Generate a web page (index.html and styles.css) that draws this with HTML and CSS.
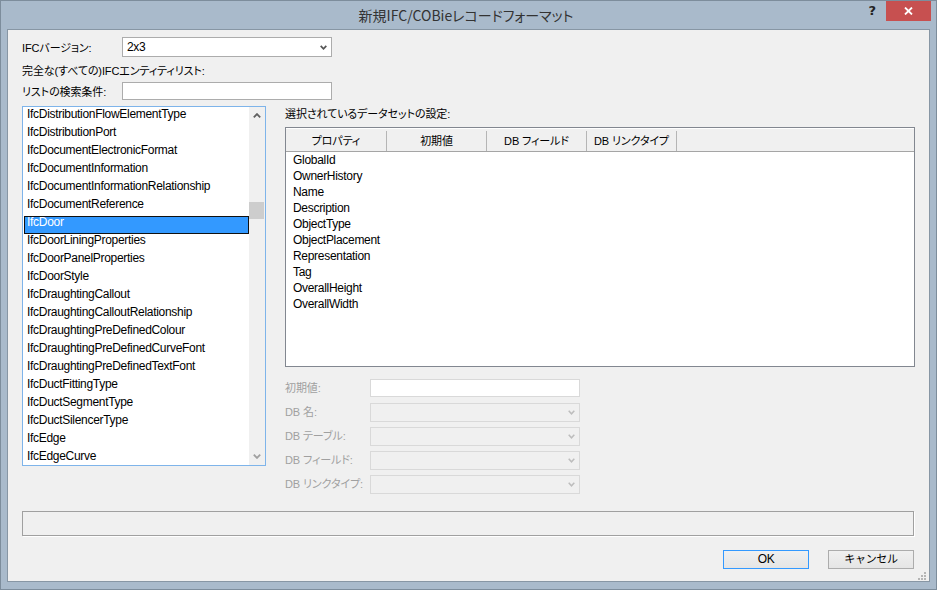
FILE: index.html
```html
<!DOCTYPE html>
<html lang="ja">
<head>
<meta charset="utf-8">
<title>新規IFC/COBieレコードフォーマット</title>
<link rel="stylesheet" href="styles.css">
</head>
<body>
<div class="window">
  <div class="titlebar">
    <div class="tb-left"></div>
    <div class="title">新規IFC/COBieレコードフォーマット</div>
    <div class="caption-buttons">
      <span class="help">?</span>
      <span class="close"><svg width="9" height="8" viewBox="0 0 9 8"><path d="M1 0.5 L8 7.5 M8 0.5 L1 7.5" stroke="#fff" stroke-width="1.8" fill="none"/></svg></span>
    </div>
  </div>
  <div class="content">
    <div class="row r1">
      <span class="lbl ja">IFCバージョン:</span>
      <div class="select"><span>2x3</span><svg class="chev" width="7" height="5" viewBox="0 0 7 5"><path d="M0.7 0.8 L3.5 3.8 L6.3 0.8" stroke="#555" stroke-width="1.7" fill="none"/></svg></div>
    </div>
    <div class="row r2 ja">完全な(すべての)IFCエンティティリスト:</div>
    <div class="row r3">
      <span class="lbl ja">リストの検索条件:</span>
      <div class="input"></div>
    </div>
    <div class="main">
      <div class="listbox">
        <div class="items">
          <div class="item">IfcDistributionFlowElementType</div>
          <div class="item">IfcDistributionPort</div>
          <div class="item">IfcDocumentElectronicFormat</div>
          <div class="item">IfcDocumentInformation</div>
          <div class="item">IfcDocumentInformationRelationship</div>
          <div class="item">IfcDocumentReference</div>
          <div class="item selected">IfcDoor</div>
          <div class="item">IfcDoorLiningProperties</div>
          <div class="item">IfcDoorPanelProperties</div>
          <div class="item">IfcDoorStyle</div>
          <div class="item">IfcDraughtingCallout</div>
          <div class="item">IfcDraughtingCalloutRelationship</div>
          <div class="item">IfcDraughtingPreDefinedColour</div>
          <div class="item">IfcDraughtingPreDefinedCurveFont</div>
          <div class="item">IfcDraughtingPreDefinedTextFont</div>
          <div class="item">IfcDuctFittingType</div>
          <div class="item">IfcDuctSegmentType</div>
          <div class="item">IfcDuctSilencerType</div>
          <div class="item">IfcEdge</div>
          <div class="item">IfcEdgeCurve</div>
        </div>
        <div class="vscroll">
          <div class="sbtn"><svg width="8" height="5" viewBox="0 0 8 5"><path d="M0.8 4.3 L4 1.1 L7.2 4.3" stroke="#606060" stroke-width="1.8" fill="none"/></svg></div>
          <div class="track"><div class="thumb"></div></div>
          <div class="sbtn"><svg width="8" height="5" viewBox="0 0 8 5"><path d="M0.8 0.7 L4 3.9 L7.2 0.7" stroke="#a0a0a0" stroke-width="1.8" fill="none"/></svg></div>
        </div>
      </div>
      <div class="right">
        <div class="caption ja">選択されているデータセットの設定:</div>
        <div class="listview">
          <div class="lv-header ja">
            <div class="hcell c1">プロパティ</div>
            <div class="hcell c2">初期値</div>
            <div class="hcell c3">DB フィールド</div>
            <div class="hcell c4">DB リンクタイプ</div>
          </div>
          <div class="lv-body">
            <div class="lv-row">GlobalId</div>
            <div class="lv-row">OwnerHistory</div>
            <div class="lv-row">Name</div>
            <div class="lv-row">Description</div>
            <div class="lv-row">ObjectType</div>
            <div class="lv-row">ObjectPlacement</div>
            <div class="lv-row">Representation</div>
            <div class="lv-row">Tag</div>
            <div class="lv-row">OverallHeight</div>
            <div class="lv-row">OverallWidth</div>
          </div>
        </div>
        <div class="form">
          <div class="frow"><span class="flabel ja">初期値:</span><div class="finput"></div></div>
          <div class="frow"><span class="flabel ja">DB 名:</span><div class="fcombo"><div class="fcombo-text"></div><svg width="7" height="5" viewBox="0 0 7 5"><path d="M0.7 0.8 L3.5 3.8 L6.3 0.8" stroke="#bdbdbd" stroke-width="1.5" fill="none"/></svg></div></div>
          <div class="frow"><span class="flabel ja">DB テーブル:</span><div class="fcombo"><div class="fcombo-text"></div><svg width="7" height="5" viewBox="0 0 7 5"><path d="M0.7 0.8 L3.5 3.8 L6.3 0.8" stroke="#bdbdbd" stroke-width="1.5" fill="none"/></svg></div></div>
          <div class="frow"><span class="flabel ja">DB フィールド:</span><div class="fcombo"><div class="fcombo-text"></div><svg width="7" height="5" viewBox="0 0 7 5"><path d="M0.7 0.8 L3.5 3.8 L6.3 0.8" stroke="#bdbdbd" stroke-width="1.5" fill="none"/></svg></div></div>
          <div class="frow"><span class="flabel ja">DB リンクタイプ:</span><div class="fcombo"><div class="fcombo-text"></div><svg width="7" height="5" viewBox="0 0 7 5"><path d="M0.7 0.8 L3.5 3.8 L6.3 0.8" stroke="#bdbdbd" stroke-width="1.5" fill="none"/></svg></div></div>
        </div>
      </div>
    </div>
    <div class="status"></div>
    <div class="buttons">
      <button class="btn default">OK</button>
      <button class="btn ja">キャンセル</button>
    </div>
    <svg class="grip" width="9" height="9" viewBox="0 0 9 9">
      <rect x="6" y="0" width="2" height="2" fill="#b5b5b5"/>
      <rect x="3" y="3" width="2" height="2" fill="#b5b5b5"/>
      <rect x="6" y="3" width="2" height="2" fill="#b5b5b5"/>
      <rect x="0" y="6" width="2" height="2" fill="#b5b5b5"/>
      <rect x="3" y="6" width="2" height="2" fill="#b5b5b5"/>
      <rect x="6" y="6" width="2" height="2" fill="#b5b5b5"/>
    </svg>
  </div>
</div>
</body>
</html>
```
FILE: styles.css
```css
* { box-sizing: border-box; }
html, body { margin: 0; padding: 0; }
body {
  width: 937px;
  height: 590px;
  overflow: hidden;
  font-family: "Liberation Sans", "Noto Sans CJK JP", sans-serif;
  font-size: 12px;
  letter-spacing: -0.3px;
  font-feature-settings: "palt";
  color: #000;
}
.ja {
  font-size: 11px;
  letter-spacing: -0.1px;
}
.window {
  width: 937px;
  height: 590px;
  background: #a9bacb;
  border: 1px solid #7d8d9c;
  display: flex;
  flex-direction: column;
}
.titlebar {
  height: 28px;
  display: grid;
  grid-template-columns: 1fr auto 1fr;
  padding-right: 5px;
}
.title {
  font-family: "Noto Sans CJK JP", sans-serif;
  font-size: 14px;
  letter-spacing: 0;
  color: #333;
  line-height: 29px;
  white-space: nowrap;
}
.caption-buttons {
  justify-self: end;
  display: flex;
  align-items: flex-start;
}
.help {
  font-family: "DejaVu Sans", sans-serif;
  font-weight: bold;
  font-size: 13px;
  color: #222;
  line-height: 20px;
  margin-right: 10px;
  letter-spacing: 0;
}
.close {
  width: 45px;
  height: 20px;
  background: #c75050;
  display: flex;
  align-items: center;
  justify-content: center;
}
.content {
  position: relative;
  margin: 0 6px;
  height: 553px;
  background: #f0f0f0;
  border: 1px solid #8796a4;
  padding: 7px 14px 0 14px;
  display: flex;
  flex-direction: column;
}
.row { display: flex; align-items: center; }
.r1 { height: 20px; }
.r2 { height: 20px; margin-top: 3px; }
.r3 { height: 18px; margin-top: 2px; }
.lbl { width: 100px; flex: none; }
.select {
  width: 210px;
  height: 20px;
  background: #fff;
  border: 1px solid #acacac;
  display: flex;
  align-items: center;
  justify-content: space-between;
  padding: 0 4px 0 4px;
}
.input {
  width: 210px;
  height: 18px;
  background: #fff;
  border: 1px solid #acacac;
}
.main {
  margin-top: 6px;
  display: grid;
  grid-template-columns: 244px 630px;
  column-gap: 19px;
  align-items: start;
}
.listbox {
  height: 360px;
  border: 1px solid #7eb4ea;
  background: #fff;
  display: flex;
  overflow: hidden;
}
.items {
  flex: 1;
  padding-top: 1px;
  overflow: hidden;
}
.item {
  height: 18px;
  line-height: 13px;
  padding-left: 4px;
  white-space: nowrap;
}
.item.selected {
  background: #3399ff;
  color: #fff;
  margin-left: 1px;
  padding-left: 3px;
  outline: 1px solid #111;
  outline-offset: -1px;
}
.vscroll {
  width: 16px;
  flex: none;
  background: #f0f0f0;
  display: flex;
  flex-direction: column;
}
.sbtn {
  height: 17px;
  display: flex;
  align-items: center;
  justify-content: center;
  flex: none;
}
.track { flex: 1; }
.thumb {
  margin-top: 78px;
  width: 15px;
  height: 17px;
  background: #cdcdcd;
}
.caption {
  height: 16px;
  line-height: 16px;
}
.listview {
  margin-top: 5px;
  height: 240px;
  border: 1px solid #828790;
  background: #fff;
}
.lv-header {
  height: 24px;
  background: #f0f0f0;
  border-bottom: 1px solid #a5a5a5;
  box-shadow: inset 0 1px 0 #fff;
  display: flex;
}
.hcell {
  margin-top: 3px;
  height: 20px;
  line-height: 20px;
  text-align: center;
  border-right: 1px solid #b5b5b5;
  white-space: nowrap;
}
.c1 { width: 101px; }
.c2 { width: 100px; }
.c3 { width: 100px; }
.c4 { width: 90px; }
.lv-row {
  height: 16px;
  line-height: 16px;
  padding-left: 7px;
  white-space: nowrap;
}
.form {
  margin-top: 12px;
  display: flex;
  flex-direction: column;
  gap: 5px;
}
.frow {
  display: flex;
  align-items: flex-start;
  height: 19px;
}
.flabel {
  width: 85px;
  flex: none;
  color: #a0a0a0;
  line-height: 18px;
  white-space: nowrap;
}
.finput {
  width: 210px;
  height: 18px;
  background: #fff;
  border: 1px solid #d9d9d9;
}
.fcombo {
  width: 210px;
  height: 19px;
  background: #f0f0f0;
  border: 1px solid #d9d9d9;
  display: flex;
  align-items: center;
  padding-right: 4px;
}
.fcombo-text {
  flex: 1;
  align-self: stretch;
  margin-right: 5px;
  background: #f0f0f0;
}
.status {
  margin-top: 17px;
  margin-right: 1px;
  height: 25px;
  border: 1px solid #a0a0a0;
  box-shadow: 1px 1px 0 #fff;
}
.buttons {
  margin-top: 14px;
  display: flex;
  justify-content: flex-end;
  gap: 19px;
  padding-right: 1px;
}
.btn {
  width: 86px;
  height: 19px;
  padding: 0;
  margin: 0;
  font-family: inherit;
  font-size: 12px;
  letter-spacing: inherit;
  color: #000;
  line-height: 17px;
  background: linear-gradient(#f0f0f0, #e5e5e5);
  border: 1px solid #acacac;
  text-align: center;
}
.btn.ja { font-size: 11px; }
.btn.default { border-color: #3399ff; }
.grip {
  position: absolute;
  right: 2px;
  bottom: 0;
}
```
